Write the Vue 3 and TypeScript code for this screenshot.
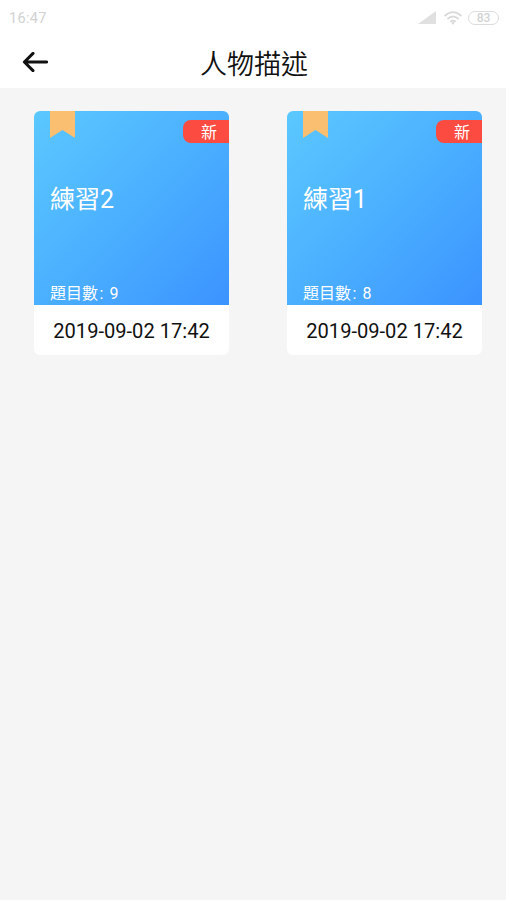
<script setup lang="ts">
interface Exercise {
  title: string
  count: number
  date: string
}

const exercises: Exercise[] = [
  { title: '練習2', count: 9, date: '2019-09-02 17:42' },
  { title: '練習1', count: 8, date: '2019-09-02 17:42' },
]
</script>

<template>
  <div class="screen">
    <div class="status">
      <span class="clock">16:47</span>
      <div class="indicators">
        <svg class="signal" width="19" height="14" viewBox="0 0 19 14">
          <path d="M0 13L18 0V13Z" />
        </svg>
        <svg class="wifi" width="20" height="14" viewBox="0 0 20 14">
          <path d="M1.5 5Q10 -2.6 18.5 5M4.4 8Q10 3 15.6 8M7.2 10.8Q10 8.4 12.8 10.8" />
          <circle cx="10" cy="12" r="1.4" />
        </svg>
        <span class="battery">83</span>
      </div>
    </div>
    <header class="bar">
      <svg class="back" width="26" height="20" viewBox="0 0 26 20">
        <path d="M11 1.4L2.4 10L11 18.6M2.8 10H24.6" />
      </svg>
      <h1 class="heading">人物描述</h1>
    </header>
    <main class="grid">
      <article v-for="item in exercises" :key="item.title" class="card">
        <div class="cover">
          <svg class="ribbon" width="25" height="27" viewBox="0 0 25 27">
            <path d="M0 0H25V27L12.5 19L0 27Z" />
          </svg>
          <span class="badge">新</span>
          <h2 class="title">{{ item.title }}</h2>
          <p class="count">題目數<span class="colon">:</span>{{ item.count }}</p>
        </div>
        <p class="date">{{ item.date }}</p>
      </article>
    </main>
  </div>
</template>

<style>
body {
  background: #f5f5f5;
}
</style>

<style scoped>
.screen {
  min-height: 900px;
  background: #f5f5f5;
  font-family: Roboto, 'Noto Sans CJK TC', sans-serif;
}
.status {
  display: flex;
  justify-content: space-between;
  align-items: center;
  height: 35px;
  padding: 0 7px 0 9px;
  background: #fff;
  box-sizing: border-box;
}
.clock {
  padding-top: 1px;
  font-size: 14.5px;
  letter-spacing: 0.3px;
  color: #d2d2d2;
}
.indicators {
  display: flex;
  align-items: center;
}
.signal {
  fill: #e0e0e0;
  margin-right: 6px;
}
.wifi {
  fill: #dadada;
  margin-right: 5px;
}
.wifi path {
  fill: none;
  stroke: #dadada;
  stroke-width: 1.7;
}
.battery {
  box-sizing: border-box;
  width: 31px;
  height: 14px;
  border: 1.5px solid #dcdcdc;
  border-radius: 7px;
  font-size: 12px;
  font-weight: 500;
  line-height: 12px;
  text-align: center;
  color: #d2d2d2;
}
.bar {
  display: grid;
  grid-template-columns: 48px 1fr 48px;
  grid-template-rows: 53px;
  align-items: center;
  background: #fff;
}
.back {
  margin-left: 22px;
}
.back path {
  fill: none;
  stroke: #111;
  stroke-width: 3;
  stroke-linecap: round;
  stroke-linejoin: round;
}
.heading {
  height: 53px;
  margin: 0;
  padding-left: 2px;
  font-size: 27px;
  font-weight: 350;
  line-height: 60px;
  text-align: center;
  color: #111;
}
.grid {
  display: grid;
  grid-template-columns: 195px 195px;
  column-gap: 58px;
  padding: 23px 0 0 34px;
}
.card {
  height: 244px;
  border-radius: 6px;
  overflow: hidden;
  background: #fff;
}
.cover {
  position: relative;
  display: flex;
  flex-direction: column;
  box-sizing: border-box;
  height: 194px;
  padding: 71px 16px 0;
  background: linear-gradient(135deg, #5bc8ff 0%, #4bb0ff 50%, #3b93ff 100%);
  color: #fff;
}
.ribbon {
  position: absolute;
  left: 16px;
  top: 0;
  fill: #fabf70;
}
.badge {
  position: absolute;
  right: 0;
  top: 9px;
  box-sizing: border-box;
  width: 46px;
  height: 23px;
  padding-left: 6px;
  border-radius: 8px 0 0 8px;
  background: #fc4b40;
  font-size: 16px;
  line-height: 25px;
  text-align: center;
}
.title {
  margin: 0;
  font-size: 25px;
  font-weight: 400;
  line-height: 36px;
}
.count {
  margin: 65px 0 0;
  font-size: 16px;
  line-height: 22px;
}
.colon {
  margin: 0 6px 0 1.5px;
}
.date {
  margin: 0;
  font-size: 20.1px;
  line-height: 52px;
  text-align: center;
  color: #111;
}
</style>
